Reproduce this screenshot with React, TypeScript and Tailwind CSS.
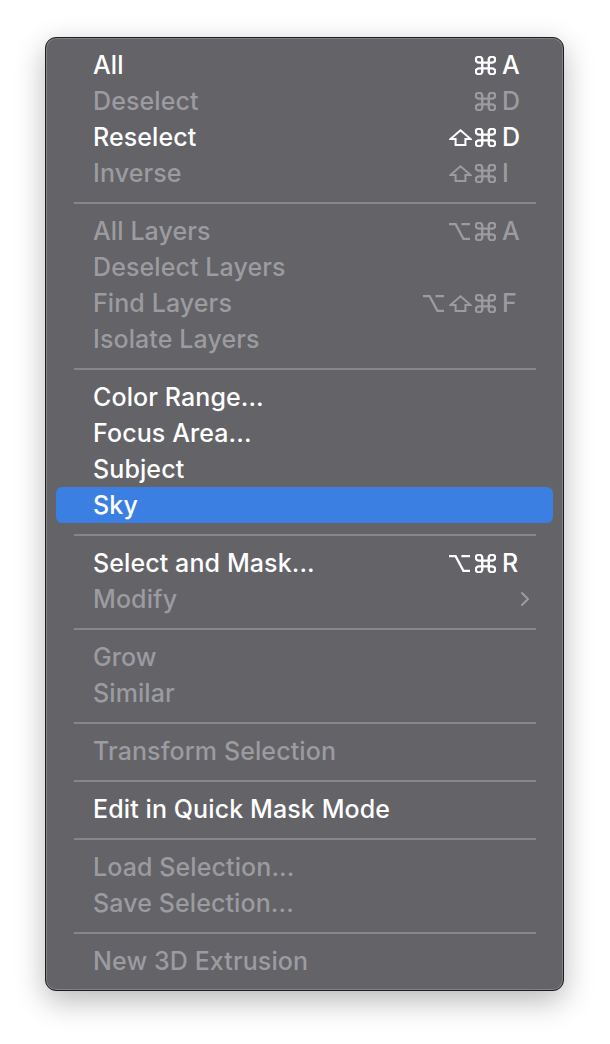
import React from "react";

type Mod = "cmd" | "shift" | "opt";

type Item = {
  label: string;
  enabled?: boolean;
  mods?: Mod[];
  keyChar?: string;
  submenu?: boolean;
  highlighted?: boolean;
};

type Group = Item[];

const groups: Group[] = [
  [
    { label: "All", enabled: true, mods: ["cmd"], keyChar: "A" },
    { label: "Deselect", mods: ["cmd"], keyChar: "D" },
    { label: "Reselect", enabled: true, mods: ["shift", "cmd"], keyChar: "D" },
    { label: "Inverse", mods: ["shift", "cmd"], keyChar: "I" },
  ],
  [
    { label: "All Layers", mods: ["opt", "cmd"], keyChar: "A" },
    { label: "Deselect Layers" },
    { label: "Find Layers", mods: ["opt", "shift", "cmd"], keyChar: "F" },
    { label: "Isolate Layers" },
  ],
  [
    { label: "Color Range...", enabled: true },
    { label: "Focus Area...", enabled: true },
    { label: "Subject", enabled: true },
    { label: "Sky", enabled: true, highlighted: true },
  ],
  [
    { label: "Select and Mask...", enabled: true, mods: ["opt", "cmd"], keyChar: "R" },
    { label: "Modify", submenu: true },
  ],
  [{ label: "Grow" }, { label: "Similar" }],
  [{ label: "Transform Selection" }],
  [{ label: "Edit in Quick Mask Mode", enabled: true }],
  [{ label: "Load Selection..." }, { label: "Save Selection..." }],
  [{ label: "New 3D Extrusion" }],
];

function ModIcon({ mod, color }: { mod: Mod; color: string }) {
  if (mod === "cmd") {
    return (
      <svg
        width="21"
        height="19"
        viewBox="2.3 2.3 19.4 19.4"
        preserveAspectRatio="none"
        fill="none"
      >
        <path
          d="M15 6v12a3 3 0 1 0 3-3H6a3 3 0 1 0 3 3V6a3 3 0 1 0-3 3h12a3 3 0 1 0-3-3"
          stroke={color}
          strokeWidth="2.2"
          strokeLinecap="round"
          strokeLinejoin="round"
        />
      </svg>
    );
  }
  if (mod === "shift") {
    return (
      <svg width="23" height="17" viewBox="0 0 23 17" fill="none">
        <path
          d="M11.5 1.3 L21.6 10 H16.4 V15.9 H6.6 V10 H1.4 Z"
          stroke={color}
          strokeWidth="2"
          strokeLinejoin="miter"
        />
      </svg>
    );
  }
  return (
    <svg width="23" height="19" viewBox="0 0 23 19" fill="none">
      <path
        d="M1 2.2 H7.6 L15.4 16.8 H22 M13.4 2.2 H22"
        stroke={color}
        strokeWidth="2.3"
      />
    </svg>
  );
}

function Row({ item }: { item: Item }) {
  const enabled = item.enabled || item.highlighted;
  const color = enabled ? "#ffffff" : "#9b9ba0";
  return (
    <div
      className={`relative flex h-[36px] items-center rounded-[6px] pl-[37px] pr-[32px] ${
        item.highlighted ? "bg-[#3a7fe1]" : ""
      } ${enabled ? "text-white" : "text-[#9b9ba0]"}`}
    >
      <span className="flex-1 text-[25px] font-medium leading-none tracking-[0.1px]">
        {item.label}
      </span>
      {item.keyChar && (
        <span className="flex items-center">
          {(item.mods || []).map((m, i) => (
            <span
              key={i}
              className={`flex items-center justify-center ${
                m === "shift" ? "w-[26px] pl-[2px]" : "w-[26px]"
              }`}
            >
              <ModIcon mod={m} color={color} />
            </span>
          ))}
          <span className="ml-[4px] w-[19px] text-left text-[25px] font-medium leading-none">
            {item.keyChar}
          </span>
        </span>
      )}
      {item.submenu && (
        <svg
          className="absolute right-[23px] top-1/2 -translate-y-1/2"
          width="10"
          height="16"
          viewBox="0 0 10 16"
          fill="none"
        >
          <path
            d="M2 2 L8 8 L2 14"
            stroke="#9b9ba0"
            strokeWidth="2"
            strokeLinecap="round"
            strokeLinejoin="round"
          />
        </svg>
      )}
    </div>
  );
}

function Separator() {
  return (
    <div className="h-[22px] pt-[11px] pl-[18px] pr-[17px]">
      <div className="h-[2px] w-full bg-[#86868b]" />
    </div>
  );
}

export default function App() {
  return (
    <div
      className="min-h-[1044px] w-[610px] bg-white pt-[37px] pl-[45px]"
      style={{ fontFamily: 'Inter, "Noto Sans", sans-serif' }}
    >
      <div className="w-[519px] rounded-[11px] border border-[#1e1e20] bg-[#636368] px-[10px] pt-[9px] pb-[11px] shadow-[inset_0_0_0_1px_rgba(255,255,255,0.2),0_10px_30px_rgba(0,0,0,0.28)]">
        {groups.map((g, gi) => (
          <React.Fragment key={gi}>
            {gi > 0 && <Separator />}
            {g.map((item, ii) => (
              <Row key={ii} item={item} />
            ))}
          </React.Fragment>
        ))}
      </div>
    </div>
  );
}
